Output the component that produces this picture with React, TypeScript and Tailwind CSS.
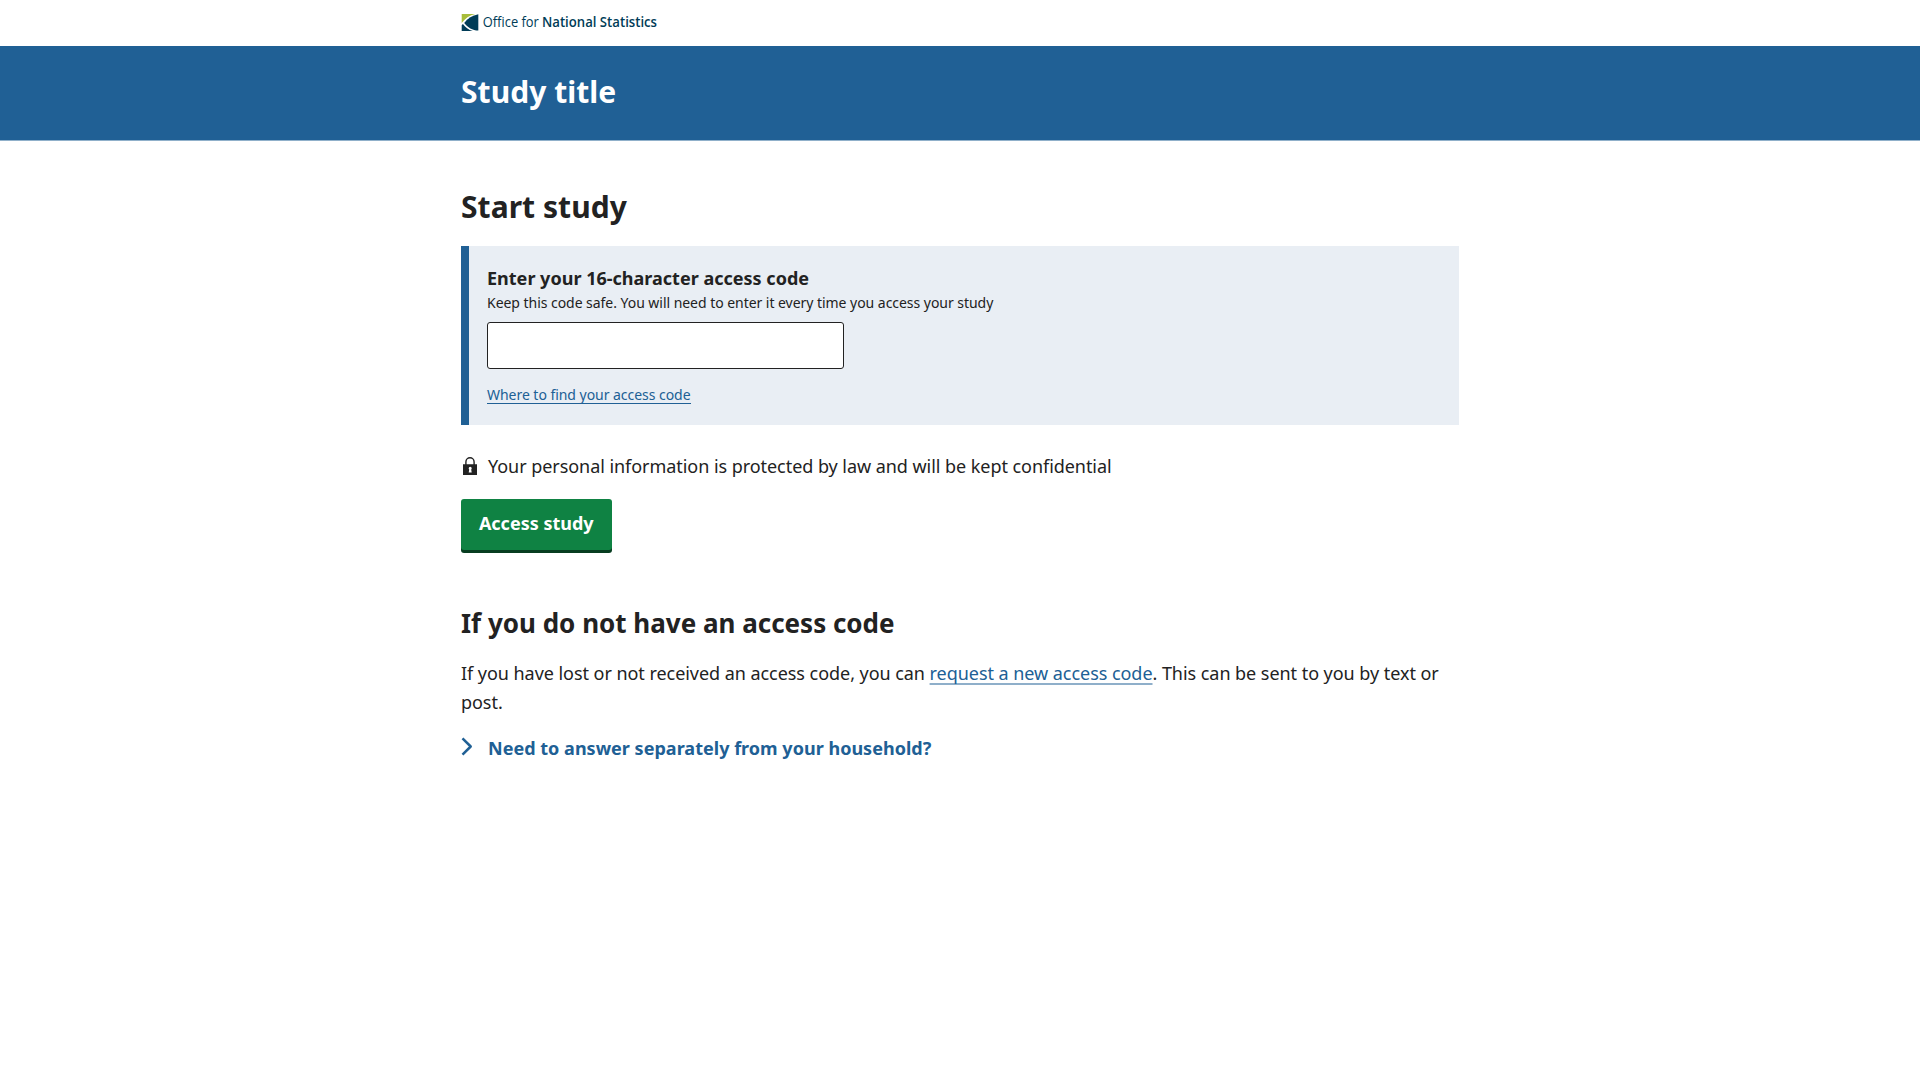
function Logo() {
  return (
    <svg className="overflow-visible" width="200" height="22" viewBox="0 0 200 22" role="img" aria-label="Office for National Statistics">
      <path d="M0.700 1h13.500C8.500 2.400 4 5.500 0.700 10z" fill="#a8bd3a" />
      <path d="M17.300 1.300V17.600C11.500 17.200 6.500 14.400 3.200 9.900 6.500 5.500 11.500 2.400 17.300 1.300z" fill="#003c57" />
      <path d="M0.700 12.200 1.900 10.900C4.200 14.300 7.600 16.600 11.800 18H0.700z" fill="#003c57" />
      <text x="21.800" y="14.400" fontFamily="'Open Sans', sans-serif" fontSize="15.200" fill="#003c57" textLength="56" lengthAdjust="spacingAndGlyphs">Office for</text>
      <text x="81" y="14.400" fontFamily="'Open Sans', sans-serif" fontSize="15.200" fontWeight="600" fill="#003c57" textLength="115" lengthAdjust="spacingAndGlyphs">National Statistics</text>
    </svg>
  );
}

function LockIcon() {
  return (
    <svg className="mt-[5px] h-[18px] w-[18px] shrink-0" viewBox="0 0 18 18" aria-hidden="true">
      <path d="M4.900 8V4.900a4.100 4.100 0 0 1 8.200 0V8" fill="none" stroke="#222" strokeWidth="1.400" />
      <path fillRule="evenodd" d="M2 7.300h14V18H2zM9.200 9.700a1.500 1.500 0 0 0-1.500 1.500c0 .5.200.9.500 1.200l-.5 3.100h3l-.5-3.100c.3-.3.500-.7.500-1.200a1.500 1.500 0 0 0-1.500-1.500z" fill="#222" />
    </svg>
  );
}

export default function App() {
  return (
    <div className="min-h-screen bg-white font-['Noto_Sans',sans-serif] text-[18px] leading-[28.8px] text-[#222]">
      <div className="h-[46px]">
        <div className="mx-auto flex w-[998px] pt-[13px]">
          <Logo />
        </div>
      </div>
      <header className="h-[94px] border-b border-[#90b0ca] bg-[#206095] box-content">
        <div className="mx-auto w-[998px] pt-[26.400px]">
          <div className="text-[30px] leading-[39px] font-bold tracking-[0.040px] text-white">Study title</div>
        </div>
      </header>
      <main className="mx-auto w-[998px] pt-[46.400px]">
        <h1 className="text-[30px] leading-[39px] font-bold tracking-[0.040px]">Start study</h1>
        <section className="mt-[19.300px] h-[179px] border-l-8 border-[#206095] bg-[#e9eef4] px-[18px] pt-[18.700px]">
          <label htmlFor="code" className="block font-bold tracking-[0.010px]">Enter your 16-character access code</label>
          <p className="text-[14px] leading-[20px] tracking-[-0.040px]">Keep this code safe. You will need to enter it every time you access your study</p>
          <input id="code" className="mt-[8.500px] block h-[47.500px] w-[357.400px] rounded-[3px] border border-[#222] bg-white px-2" />
          <a href="#find" className="mt-[16.400px] inline-block border-b border-[#206095] text-[14px] leading-[17px] tracking-[-0.040px] text-[#206095]">Where to find your access code</a>
        </section>
        <p className="mt-[27.300px] flex gap-[9px] tracking-[-0.050px]">
          <LockIcon />
          Your personal information is protected by law and will be kept confidential
        </p>
        <button className="mt-[18px] block h-[51.300px] w-[150.500px] rounded-[3px] bg-[#0f8243] pb-[2px] text-center text-[18px] font-bold text-white shadow-[0_3px_0_#073d20]">Access study</button>
        <h2 className="mt-[56px] text-[26px] leading-[34px] font-bold">If you do not have an access code</h2>
        <p className="mt-[18.700px] tracking-[-0.048px]">
          If you have lost or not received an access code, you can{" "}
          <a href="#request" className="text-[#206095] underline decoration-[#206095]/50 decoration-2 underline-offset-[3px] [text-decoration-skip-ink:none]">request a new access code</a>. This can be sent to you by text or post.
        </p>
        <div className="mt-[18px] flex font-bold tracking-[0.020px] text-[#206095]">
          <svg className="mt-[3px] mr-[15px] h-[19px] w-[12px]" viewBox="0 0 12 19" fill="none" stroke="#206095" strokeWidth="2.500" strokeLinejoin="round" aria-hidden="true">
            <path d="M1.500 1.300 9.700 9.500 1.500 17.700" />
          </svg>
          Need to answer separately from your household?
        </div>
      </main>
    </div>
  );
}
